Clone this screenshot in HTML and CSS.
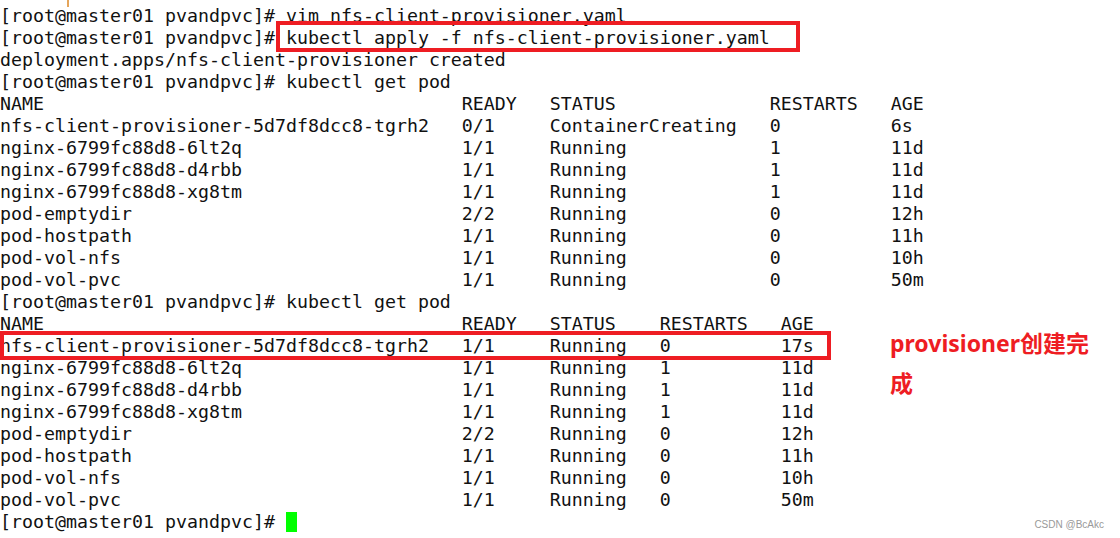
FILE: index.html
```html
<!DOCTYPE html>
<html lang="zh-CN">
<head>
  <meta charset="UTF-8" />
  <meta name="viewport" content="width=device-width, initial-scale=1.0"/>
  <title>kubectl get pod</title>
  <link rel="stylesheet" href="styles.css">
</head>
<body>

  <div class="screen">
    <span class="scrap"></span>

    <div class="term">
      <div class="line">[root@master01 pvandpvc]# vim nfs-client-provisioner.yaml</div>
      <div class="line">[root@master01 pvandpvc]# kubectl apply -f nfs-client-provisioner.yaml</div>
      <div class="line">deployment.apps/nfs-client-provisioner created</div>
      <div class="line">[root@master01 pvandpvc]# kubectl get pod</div>

      <!-- first listing -->
      <div class="pods pods-wide">
        <div>NAME</div><div>READY</div><div>STATUS</div><div>RESTARTS</div><div>AGE</div>
        <div>nfs-client-provisioner-5d7df8dcc8-tgrh2</div><div>0/1</div><div>ContainerCreating</div><div>0</div><div>6s</div>
        <div>nginx-6799fc88d8-6lt2q</div><div>1/1</div><div>Running</div><div>1</div><div>11d</div>
        <div>nginx-6799fc88d8-d4rbb</div><div>1/1</div><div>Running</div><div>1</div><div>11d</div>
        <div>nginx-6799fc88d8-xg8tm</div><div>1/1</div><div>Running</div><div>1</div><div>11d</div>
        <div>pod-emptydir</div><div>2/2</div><div>Running</div><div>0</div><div>12h</div>
        <div>pod-hostpath</div><div>1/1</div><div>Running</div><div>0</div><div>11h</div>
        <div>pod-vol-nfs</div><div>1/1</div><div>Running</div><div>0</div><div>10h</div>
        <div>pod-vol-pvc</div><div>1/1</div><div>Running</div><div>0</div><div>50m</div>
      </div>

      <div class="line">[root@master01 pvandpvc]# kubectl get pod</div>

      <!-- second listing -->
      <div class="pods pods-narrow">
        <div>NAME</div><div>READY</div><div>STATUS</div><div>RESTARTS</div><div>AGE</div>
        <div>nfs-client-provisioner-5d7df8dcc8-tgrh2</div><div>1/1</div><div>Running</div><div>0</div><div>17s</div>
        <div>nginx-6799fc88d8-6lt2q</div><div>1/1</div><div>Running</div><div>1</div><div>11d</div>
        <div>nginx-6799fc88d8-d4rbb</div><div>1/1</div><div>Running</div><div>1</div><div>11d</div>
        <div>nginx-6799fc88d8-xg8tm</div><div>1/1</div><div>Running</div><div>1</div><div>11d</div>
        <div>pod-emptydir</div><div>2/2</div><div>Running</div><div>0</div><div>12h</div>
        <div>pod-hostpath</div><div>1/1</div><div>Running</div><div>0</div><div>11h</div>
        <div>pod-vol-nfs</div><div>1/1</div><div>Running</div><div>0</div><div>10h</div>
        <div>pod-vol-pvc</div><div>1/1</div><div>Running</div><div>0</div><div>50m</div>
      </div>

      <div class="line">[root@master01 pvandpvc]# <span class="cursor"></span></div>
    </div>

    <div class="note">provisioner创建完成</div>

    <!-- red marks drawn over the terminal -->
    <div class="mark mark-cmd"></div>
    <div class="mark mark-row"></div>

    <div class="watermark">CSDN @BcAkc</div>
  </div>

</body>
</html>
```

FILE: styles.css
```css
body {
  margin: 0;
  background-color: #fff;
}

.screen {
  position: relative;
  display: flex;
  align-items: flex-start;
  width: 1120px;
  height: 538px;
  overflow: hidden;
}

.term {
  flex: none;
  width: 880px;
  padding-top: 5px;
  font-family: "DejaVu Sans Mono", monospace;
  font-size: 18.27px;
  line-height: 22px;
  color: #111;
}

.line {
  height: 22px;
  white-space: pre;
}

.pods {
  display: grid;
  grid-auto-rows: 22px;
  white-space: nowrap;
}

.pods-wide {
  grid-template-columns: 42ch 8ch 20ch 11ch auto;
}

.pods-narrow {
  grid-template-columns: 42ch 8ch 10ch 11ch auto;
}

.cursor {
  display: inline-block;
  width: 11px;
  height: 20px;
  background-color: #00ff00;
  vertical-align: -4px;
}

.note {
  flex: none;
  width: 215px;
  margin-top: 323px;
  margin-left: 10px;
  font-family: "Noto Sans", "Noto Sans CJK SC", sans-serif;
  font-size: 23px;
  font-weight: bold;
  line-height: 40px;
  color: #ee1d23;
}

.mark {
  position: absolute;
  border: 4px solid #ee1d23;
  box-sizing: border-box;
}

.mark-cmd {
  left: 276px;
  top: 21px;
  width: 524px;
  height: 31px;
}

.mark-row {
  left: 0;
  top: 331px;
  width: 831px;
  height: 29px;
}

.scrap {
  position: absolute;
  left: 67px;
  top: 0;
  width: 2px;
  height: 7px;
  background-color: #e5a55a;
}

.watermark {
  position: absolute;
  right: 16px;
  bottom: 8px;
  font-family: "Liberation Sans", Arial, sans-serif;
  font-size: 10px;
  color: #999;
}
```
